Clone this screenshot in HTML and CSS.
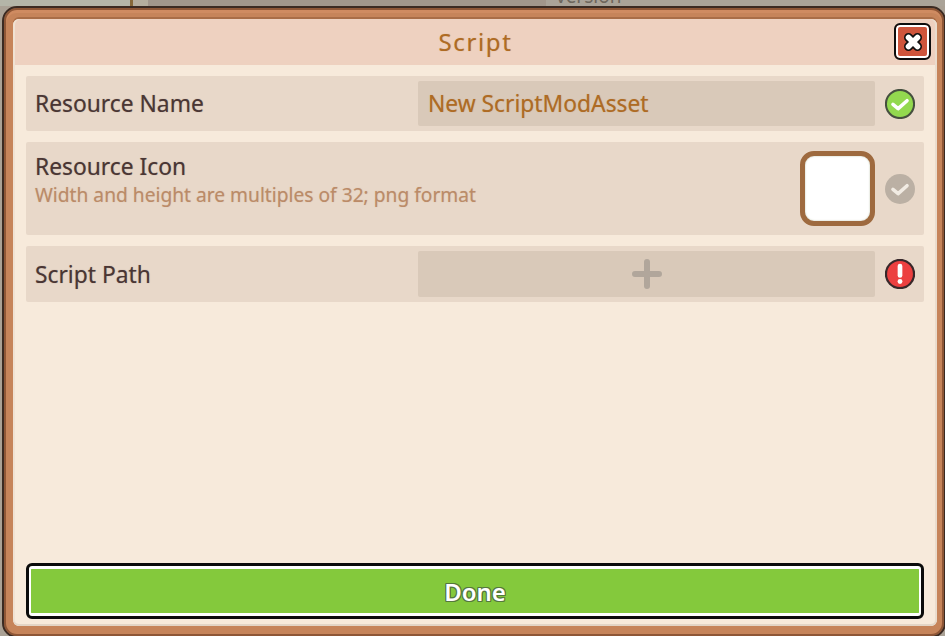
FILE: index.html
```html
<!DOCTYPE html>
<html lang="en">
<head>
<meta charset="utf-8">
<title>Script</title>
<link rel="stylesheet" href="styles.css">
</head>
<body>
<div class="backdrop">
  <div class="bd-a"></div>
  <div class="bd-b"></div>
  <div class="bd-c"></div>
  <div class="bd-d"><span class="bd-text">version</span></div>
  <div class="bd-e"></div>
</div>
<main class="panel">
  <div class="panel-inner">
    <header class="title-bar">
      <h1 class="title">Script</h1>
      <button class="close" aria-label="Close">
        <svg class="close-icon" viewBox="0 0 24 24" width="24" height="24">
          <path d="M7.5 7.5 L16.5 16.5 M16.5 7.5 L7.5 16.5" stroke="#111" stroke-width="9" stroke-linecap="round"/>
          <path d="M7.5 7.5 L16.5 16.5 M16.5 7.5 L7.5 16.5" stroke="#fff" stroke-width="5.6" stroke-linecap="round"/>
        </svg>
      </button>
    </header>
    <section class="rows">
      <div class="row row-first">
        <div class="label">Resource Name</div>
        <div class="field value">New ScriptModAsset</div>
        <svg class="status" viewBox="0 0 32 32" width="30" height="30">
          <circle cx="16" cy="16" r="15" fill="#93d94f" stroke="#46503f" stroke-width="2.2"/>
          <path d="M8.5 16.5 L14 21 L23.5 12.5" fill="none" stroke="#fff" stroke-width="3.8" stroke-linecap="round" stroke-linejoin="round"/>
        </svg>
      </div>
      <div class="row row-tall">
        <div class="label-stack">
          <div class="label">Resource Icon</div>
          <div class="hint">Width and height are multiples of 32; png format</div>
        </div>
        <div class="icon-box"></div>
        <svg class="status" viewBox="0 0 32 32" width="30" height="30">
          <circle cx="16" cy="16" r="16" fill="#bbb0a4"/>
          <path d="M8.5 16.5 L14 21 L23.5 12.5" fill="none" stroke="#f1ebe3" stroke-width="3.8" stroke-linecap="round" stroke-linejoin="round"/>
        </svg>
      </div>
      <div class="row">
        <div class="label">Script Path</div>
        <div class="field add">
          <svg viewBox="0 0 30 30" width="30" height="30">
            <path d="M15 3 V27 M3 15 H27" stroke="#b1a69b" stroke-width="6" stroke-linecap="round"/>
          </svg>
        </div>
        <svg class="status" viewBox="0 0 32 32" width="30" height="30">
          <circle cx="16" cy="16" r="15" fill="#ec4040" stroke="#38282a" stroke-width="2.4"/>
          <path d="M16 7.5 V17.5" stroke="#fff" stroke-width="5" stroke-linecap="round"/>
          <circle cx="16" cy="24" r="2.6" fill="#fff"/>
        </svg>
      </div>
    </section>
    <div class="footer">
      <button class="done"><span class="done-text">Done</span></button>
    </div>
  </div>
</main>
</body>
</html>
```
FILE: styles.css
```css
* { box-sizing: border-box; }
html, body { margin: 0; padding: 0; }
body {
  width: 945px;
  height: 636px;
  overflow: hidden;
  background: #aaa195;
  font-family: "Noto Sans", "Noto Sans CJK SC", sans-serif;
  padding: 0 0 0 2px;
}
.backdrop {
  display: flex;
  height: 6px;
  margin-left: -2px;
  overflow: hidden;
}
.bd-a { width: 130px; background: #b4b5a8; }
.bd-b { width: 3px; background: #86683a; }
.bd-c { width: 15px; background: #b5ae9e; }
.bd-d { width: 398px; background: #a1968b; position: relative; }
.bd-e { flex: 1; background: #aaa398; }
.bd-text {
  position: absolute;
  left: 408px;
  top: -14px;
  font-size: 19px;
  line-height: 20px;
  color: #6e665c;
}
.panel {
  width: 944px;
  height: 632px;
  background: #c6845a;
  border: 2px solid #3b2a22;
  border-radius: 15px;
  padding: 11px 7px 10px 9px;
  box-shadow: inset 0 0 0 2px #8e5636, inset 0 3px 0 2px #cf8b61;
}
.panel-inner {
  height: 100%;
  background: #f7eadb;
  border-radius: 6px;
  display: flex;
  flex-direction: column;
  position: relative;
  overflow: hidden;
  box-shadow: 0 -2px 0 #a96d47;
}
.panel-inner::after {
  content: "";
  position: absolute;
  inset: 0;
  border-radius: 6px;
  box-shadow: inset 0 -2px 0 #e3d5c6, inset 2px 0 0 #f0e2d3, inset -2px 0 0 #eadccd;
  pointer-events: none;
}
.title-bar {
  height: 46px;
  flex: none;
  background: #eed1c0;
  display: flex;
  align-items: center;
  justify-content: center;
  padding: 0 0 2px 1px;
  position: relative;
}
.title {
  margin: 0;
  font-size: 24px;
  font-weight: 400;
  letter-spacing: 1.6px;
  color: #ae6b24;
  text-shadow: 0 0 1px rgba(174, 107, 36, .45);
}
.close {
  position: absolute;
  right: 6px;
  top: 4px;
  width: 37px;
  height: 37px;
  padding: 0;
  background: #cf553c;
  border: 2px solid #0d0d0d;
  border-radius: 6px;
  box-shadow: inset 0 0 0 2px #fff;
  display: flex;
  align-items: center;
  justify-content: center;
}
.close-icon { display: block; }
.rows {
  flex: 1;
  display: flex;
  flex-direction: column;
  gap: 11px;
  padding: 11px 13px 0;
}
.row {
  height: 56px;
  background: #e8d8c9;
  border-radius: 2px;
  display: flex;
  align-items: center;
  padding: 0 9px;
}
.row-first { height: 55px; }
.row-tall { height: 93px; }
.label {
  width: 383px;
  font-size: 22.8px;
  color: #4a3634;
  text-shadow: 0 0 1px rgba(74, 54, 52, .45);
}
.label-stack {
  flex: 1;
  align-self: flex-start;
  padding-top: 10px;
}
.label-stack .label { width: auto; line-height: 30px; }
.hint {
  margin-top: 1px;
  font-size: 19.2px;
  line-height: 24px;
  color: #bb8b68;
  text-shadow: 0 0 1px rgba(187, 139, 104, .45);
}
.field {
  width: 457px;
  height: 45px;
  background: #d9c9b9;
  border-radius: 2px;
  display: flex;
  align-items: center;
}
.value {
  padding-left: 10px;
  font-size: 22.8px;
  color: #ae6b24;
  text-shadow: 0 0 1px rgba(174, 107, 36, .45);
}
.add { height: 46px; justify-content: center; }
.add svg { display: block; }
.status { flex: none; margin-left: 10px; display: block; }
.icon-box {
  width: 75px;
  height: 75px;
  background: #fff;
  border: 5px solid #9e6a3f;
  border-radius: 14px;
  box-shadow: inset 0 0 2px #b9c0a8;
}
.footer { padding: 0 13px 7px; }
.done {
  display: block;
  width: 898px;
  height: 56px;
  padding: 0;
  background: #84c93c;
  border: 3px solid #0b0b0b;
  border-radius: 6px;
  box-shadow: inset 2px 0 0 #fff, inset -2px 0 0 #fff, inset 0 3px 0 #fff, inset 0 -3px 0 #fff;
  font-family: inherit;
}
.done-text {
  font-size: 24px;
  color: #fff;
  font-weight: 600;
  text-shadow: -1px -1px 0 #55783c, 1px -1px 0 #55783c, -1px 1px 0 #55783c, 1px 1px 0 #55783c, 0 -1px 0 #55783c, 0 1px 0 #55783c, -1px 0 0 #55783c, 1px 0 0 #55783c;
}
```
